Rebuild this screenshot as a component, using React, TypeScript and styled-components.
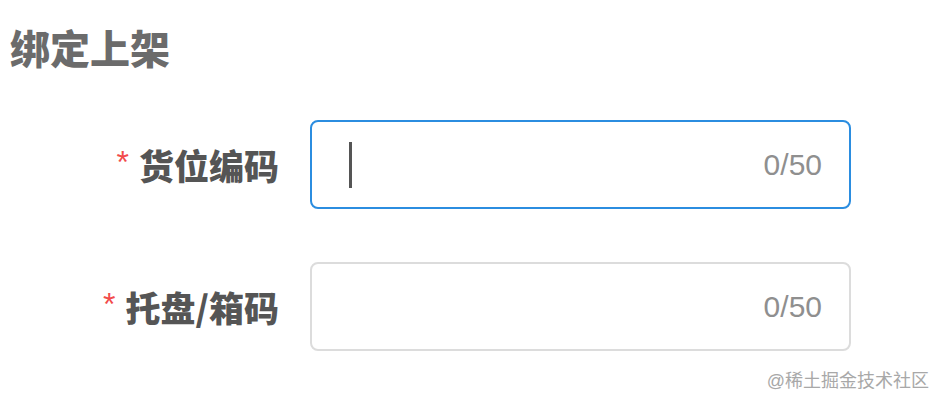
import styled, { createGlobalStyle } from 'styled-components';

const GlobalStyle = createGlobalStyle`
  html, body {
    margin: 0;
    padding: 0;
    background: #fff;
  }
  body {
    font-family: "Noto Sans CJK SC", "Liberation Sans", sans-serif;
  }
`;

const Page = styled.div`
  position: relative;
  width: 944px;
  height: 407px;
  overflow: hidden;
  padding: 19px 0 0 10px;
  box-sizing: border-box;
`;

const Title = styled.h1`
  margin: 0;
  font-size: 40px;
  line-height: 56px;
  font-weight: 900;
  color: #6b6b6b;
`;

const Form = styled.div`
  display: flex;
  flex-direction: column;
  gap: 53px;
  margin-top: 45px;
`;

const Row = styled.div`
  display: grid;
  grid-template-columns: 269px 541px;
  column-gap: 31px;
  align-items: center;
`;

const Label = styled.label`
  display: flex;
  justify-content: flex-end;
  align-items: center;
  font-size: 35px;
  font-weight: 900;
  color: #555;
`;

const Required = styled.span`
  font-family: "Liberation Sans", sans-serif;
  color: #f24b4b;
  font-size: 32px;
  font-weight: 400;
  margin-right: 10px;
  position: relative;
  top: -2px;
`;

const Field = styled.div<{ $focused?: boolean }>`
  box-sizing: border-box;
  height: 89px;
  display: flex;
  align-items: center;
  justify-content: space-between;
  padding: 0 27px 0 37px;
  border: 2px solid ${p => (p.$focused ? '#2b8de0' : '#dcdcdc')};
  border-radius: 8px;
  background: #fff;
`;

const Caret = styled.span`
  width: 3px;
  height: 46px;
  background: #555;
`;

const Counter = styled.span`
  margin-left: auto;
  font-family: "Liberation Sans", sans-serif;
  font-size: 30px;
  color: #8f8f8f;
`;

const Watermark = styled.div`
  position: absolute;
  right: 15px;
  top: 370px;
  font-size: 18px;
  line-height: 22px;
  color: #a8a8a8;
  font-family: "Liberation Sans", "Noto Sans CJK SC", sans-serif;
`;

export default function App() {
  return (
    <>
      <GlobalStyle />
      <Page>
        <Title>绑定上架</Title>
        <Form>
          <Row>
            <Label>
              <Required>*</Required>货位编码
            </Label>
            <Field $focused>
              <Caret />
              <Counter>0/50</Counter>
            </Field>
          </Row>
          <Row>
            <Label>
              <Required>*</Required>托盘/箱码
            </Label>
            <Field>
              <Counter>0/50</Counter>
            </Field>
          </Row>
        </Form>
        <Watermark>@稀土掘金技术社区</Watermark>
      </Page>
    </>
  );
}
